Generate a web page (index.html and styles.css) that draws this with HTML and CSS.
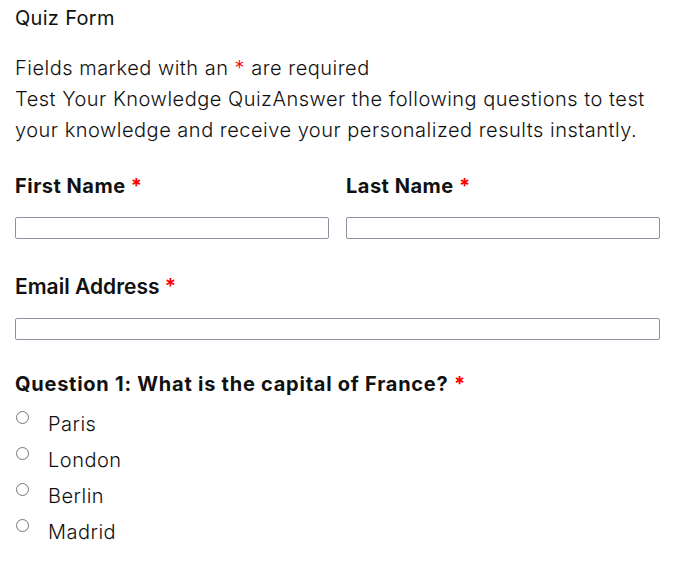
FILE: index.html
```html
<!DOCTYPE html>
<html lang="en">
<head>
    <meta charset="UTF-8">
    <meta name="viewport" content="width=device-width, initial-scale=1.0">
    <title>Quiz Form</title>
    <link rel="stylesheet" href="styles.css">
</head>
<body>
    <div class="quiz-form">
        <!-- Form title -->
        <div class="form-title">Quiz Form</div>

        <!-- Intro text -->
        <div class="form-intro">
            <p>Fields marked with an <span class="required">*</span> are required</p>
            <p>Test Your Knowledge QuizAnswer the following questions to test your knowledge and receive your personalized results instantly.</p>
        </div>

        <form>
            <!-- Name row -->
            <div class="field-row">
                <div class="field">
                    <label for="firstName">First Name <span class="required">*</span></label>
                    <input type="text" id="firstName">
                </div>
                <div class="field">
                    <label for="lastName">Last Name <span class="required">*</span></label>
                    <input type="text" id="lastName">
                </div>
            </div>

            <!-- Email -->
            <div class="field field-email">
                <label for="email" class="label-narrow">Email Address <span class="required">*</span></label>
                <input type="email" id="email">
            </div>

            <!-- Question 1 -->
            <fieldset class="question">
                <legend>Question 1: What is the capital of France? <span class="required">*</span></legend>
                <label class="option"><input type="radio" name="q1" value="paris"><span>Paris</span></label>
                <label class="option"><input type="radio" name="q1" value="london"><span>London</span></label>
                <label class="option"><input type="radio" name="q1" value="berlin"><span>Berlin</span></label>
                <label class="option"><input type="radio" name="q1" value="madrid"><span>Madrid</span></label>
            </fieldset>
        </form>
    </div>
</body>
</html>
```

FILE: styles.css
```css
/* Global styles */
:root {
    --text-color: #111111;
    --required-color: #ff0000;
    --border-color: #8f8f9d;
}

body {
    font-family: Inter, 'Noto Sans', sans-serif;
    margin: 0;
    padding: 0;
    color: var(--text-color);
    background-color: white;
}

/* Container */
.quiz-form {
    width: 645px;
    padding: 0 15px;
}

.form-title {
    font-size: 20px;
    font-weight: 400;
    line-height: 30px;
    margin-top: 3px;
    letter-spacing: 0.3px;
}

.form-intro {
    margin-top: 20px;
    font-size: 20px;
    font-weight: 300;
    line-height: 31px;
    letter-spacing: 0.5px;
}

.form-intro p {
    margin: 0;
}

.required {
    color: var(--required-color);
}

/* Fields */
.field-row {
    display: flex;
    gap: 17px;
}

.field-row .field {
    flex: 1;
}

.field {
    margin-top: 25px;
}

.field-email {
    margin-top: 33px;
}

.field label {
    display: block;
    font-size: 20px;
    font-weight: 700;
    line-height: 30px;
    margin-bottom: 16px;
    letter-spacing: 0.5px;
}

.field .label-narrow {
    font-weight: 600;
    font-size: 21px;
    letter-spacing: 0;
}

.field input {
    display: block;
    width: 100%;
    height: 22px;
    box-sizing: border-box;
    border: 1px solid var(--border-color);
    border-radius: 2px;
    padding: 0 4px;
    margin: 0;
    font-size: 14px;
}

/* Question */
.question {
    border: none;
    margin: 29px 0 0;
    padding: 0;
}

.question legend {
    padding: 0;
    font-size: 20px;
    font-weight: 700;
    line-height: 30px;
    margin-bottom: 7px;
    letter-spacing: 0.75px;
}

.option {
    display: flex;
    align-items: flex-start;
    font-size: 20px;
    font-weight: 300;
    line-height: 36px;
    letter-spacing: 0.5px;
}

.option input {
    margin: 5px 19px 0 1px;
    width: 13px;
    height: 13px;
}
```
